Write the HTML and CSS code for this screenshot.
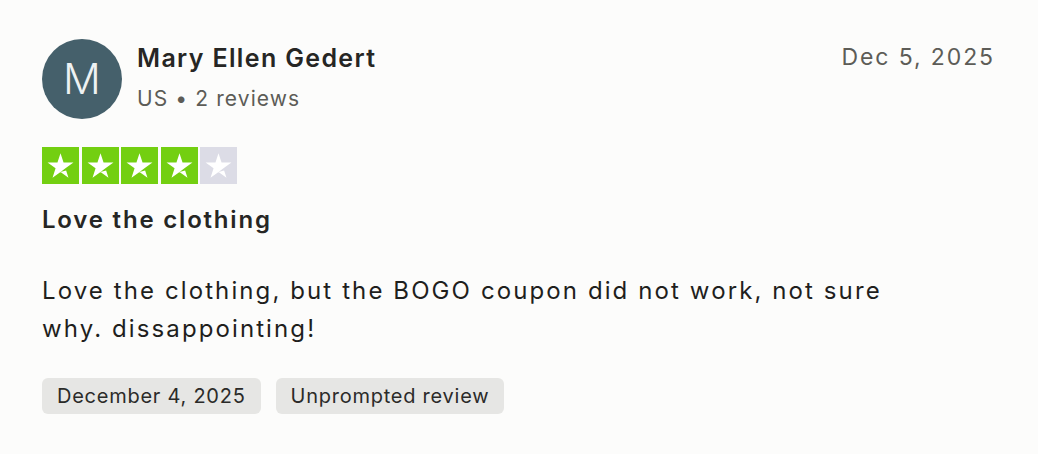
FILE: index.html
```html
<!DOCTYPE html>
<html lang="en">
<head>
<meta charset="utf-8">
<link rel="stylesheet" href="styles.css">
</head>
<body>
<article class="review">
  <header class="review-header">
    <div class="consumer">
      <div class="avatar">M</div>
      <div class="consumer-info">
        <div class="consumer-name">Mary Ellen Gedert</div>
        <div class="consumer-meta">US • 2 reviews</div>
      </div>
    </div>
    <time class="review-date">Dec 5, 2025</time>
  </header>
  <div class="stars" aria-label="Rated 4 out of 5 stars">
    <span class="star on"><svg viewBox="0 0 96 96"><path d="M48 64.7l14.6-3.7 6.1 18.8zM81.6 40.4H55.9L48 16.2l-7.9 24.2H14.4l20.8 15-7.9 24.2 20.8-15 12.8-9.2z" fill="#fff"/></svg></span>
    <span class="star on"><svg viewBox="0 0 96 96"><path d="M48 64.7l14.6-3.7 6.1 18.8zM81.6 40.4H55.9L48 16.2l-7.9 24.2H14.4l20.8 15-7.9 24.2 20.8-15 12.8-9.2z" fill="#fff"/></svg></span>
    <span class="star on"><svg viewBox="0 0 96 96"><path d="M48 64.7l14.6-3.7 6.1 18.8zM81.6 40.4H55.9L48 16.2l-7.9 24.2H14.4l20.8 15-7.9 24.2 20.8-15 12.8-9.2z" fill="#fff"/></svg></span>
    <span class="star on"><svg viewBox="0 0 96 96"><path d="M48 64.7l14.6-3.7 6.1 18.8zM81.6 40.4H55.9L48 16.2l-7.9 24.2H14.4l20.8 15-7.9 24.2 20.8-15 12.8-9.2z" fill="#fff"/></svg></span>
    <span class="star off"><svg viewBox="0 0 96 96"><path d="M48 64.7l14.6-3.7 6.1 18.8zM81.6 40.4H55.9L48 16.2l-7.9 24.2H14.4l20.8 15-7.9 24.2 20.8-15 12.8-9.2z" fill="#fff"/></svg></span>
  </div>
  <h2 class="review-title">Love the clothing</h2>
  <p class="review-body">Love the clothing, but the BOGO coupon did not work, not sure why. dissappointing!</p>
  <div class="tags">
    <span class="tag">December 4, 2025</span>
    <span class="tag">Unprompted review</span>
  </div>
</article>
</body>
</html>
```
FILE: styles.css
```css
* { box-sizing: border-box; }
html, body { margin: 0; padding: 0; }
body {
  background: #fcfcfb;
  font-family: Inter, "Noto Sans", "DejaVu Sans", sans-serif;
  color: #1f1f1d;
}
.review {
  padding: 39px 43px 0 42px;
}
.review-header {
  display: flex;
  justify-content: space-between;
  align-items: flex-start;
}
.consumer {
  display: flex;
  align-items: flex-start;
  gap: 15px;
}
.avatar {
  flex: none;
  width: 80px;
  height: 80px;
  border-radius: 50%;
  background: #45606b;
  color: #eef2f3;
  display: flex;
  align-items: center;
  justify-content: center;
  font-size: 42px;
  font-weight: 300;
  line-height: 1;
}
.consumer-info {
  display: flex;
  flex-direction: column;
  gap: 13px;
  padding-top: 4px;
}
.consumer-name {
  font-size: 25px;
  font-weight: 600;
  line-height: 30px;
  letter-spacing: 1.35px;
  color: #262624;
}
.consumer-meta {
  font-size: 21px;
  line-height: 26px;
  letter-spacing: 1.1px;
  color: #5d5c57;
}
.review-date {
  font-size: 23px;
  line-height: 26px;
  margin-top: 5px;
  letter-spacing: 1.9px;
  color: #5d5c57;
}
.stars {
  display: flex;
  gap: 2.5px;
  margin-top: 28px;
}
.star {
  width: 37px;
  height: 37px;
  display: block;
}
.star svg { display: block; width: 37px; height: 37px; }
.star.on { background: #73cf11; }
.star.off { background: #dcdce6; }
.review-title {
  margin: 21px 0 0;
  font-size: 24px;
  font-weight: 600;
  line-height: 30px;
  letter-spacing: 1.8px;
  color: #262624;
}
.review-body {
  margin: 37px 0 0;
  max-width: 860px;
  font-size: 24px;
  line-height: 38px;
  letter-spacing: 2.1px;
  color: #1f1f1d;
}
.tags {
  display: flex;
  gap: 15px;
  margin-top: 30px;
}
.tag {
  display: inline-flex;
  align-items: center;
  height: 36px;
  padding: 0 15px;
  border-radius: 6px;
  background: #e6e6e4;
  font-size: 20px;
  letter-spacing: 0.75px;
  color: #2b2b29;
}
```
